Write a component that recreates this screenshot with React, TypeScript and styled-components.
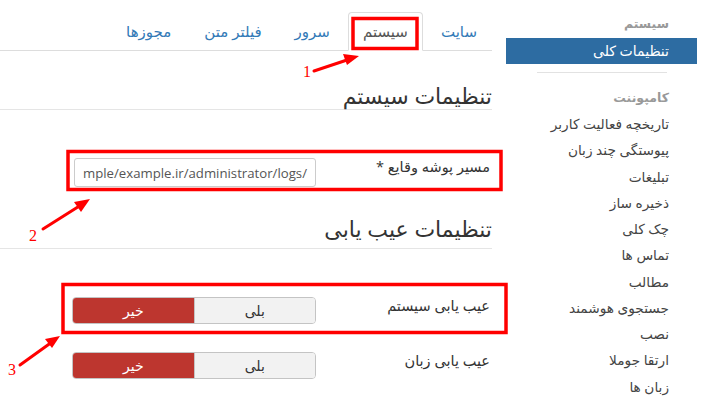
import * as React from 'react';
import styled, { createGlobalStyle } from 'styled-components';

const sideItems = [
  'تاریخچه فعالیت کاربر',
  'پیوستگی چند زبان',
  'تبلیغات',
  'ذخیره ساز',
  'چک کلی',
  'تماس ها',
  'مطالب',
  'جستجوی هوشمند',
  'نصب',
  'ارتقا جوملا',
  'زبان ها',
];

const tabs = ['سایت', 'سیستم', 'سرور', 'فیلتر متن', 'مجوزها'];

const App: React.FC = () => {
  return (
    <>
      <GlobalStyle />
      <Page>
        <Sidebar>
          <NavHeader $top={14}>سیستم</NavHeader>
          <ActiveItem>تنظیمات کلی</ActiveItem>
          <Divider />
          <NavHeader $top={15}>کامپوننت</NavHeader>
          <NavList>
            {sideItems.map((item) => (
              <NavItem key={item}>{item}</NavItem>
            ))}
          </NavList>
        </Sidebar>

        <Main>
          <Tabs>
            {tabs.map((t) => (
              <Tab key={t} $active={t === 'سیستم'}>
                {t}
              </Tab>
            ))}
          </Tabs>

          <SectionTitle $top={30} $bottom={0}>تنظیمات سیستم</SectionTitle>

          <FormRow $top={48}>
            <Label>مسیر پوشه وقایع *</Label>
            <TextBox>
              <span>mple/example.ir/administrator/logs/</span>
            </TextBox>
          </FormRow>

          <SectionTitle $top={27} $bottom={6}>تنظیمات عیب یابی</SectionTitle>

          <FormRow $top={48}>
            <Label>عیب یابی سیستم</Label>
            <Toggle>
              <ToggleBtn>بلی</ToggleBtn>
              <ToggleBtn $on>خیر</ToggleBtn>
            </Toggle>
          </FormRow>

          <FormRow $top={28}>
            <Label>عیب یابی زبان</Label>
            <Toggle>
              <ToggleBtn>بلی</ToggleBtn>
              <ToggleBtn $on>خیر</ToggleBtn>
            </Toggle>
          </FormRow>
        </Main>

        {/* red annotation marks drawn over the screenshot */}
        <Marks width="707" height="403" viewBox="0 0 707 403">
          <g fill="none" stroke="#f00" strokeWidth="3.5">
            <rect x="353" y="18.5" width="64" height="30" />
            <rect x="68" y="151.5" width="433" height="38" />
            <rect x="63" y="284.5" width="443" height="48" />
          </g>
          <g stroke="#f00" strokeWidth="3" strokeLinecap="round">
            <line x1="314" y1="71" x2="347" y2="60" />
            <line x1="43" y1="229" x2="81" y2="205" />
            <line x1="20" y1="365" x2="52" y2="342" />
          </g>
          <g fill="#f00">
            <polygon points="359,56 343,54 347,65" />
            <polygon points="90,199 74,202 81,212" />
            <polygon points="60,336 45,339 52,348" />
          </g>
          <g fill="#f00" fontFamily="'Liberation Serif', serif" fontSize="16">
            <text x="307" y="77" textAnchor="middle">1</text>
            <text x="33" y="241" textAnchor="middle">2</text>
            <text x="12" y="375" textAnchor="middle">3</text>
          </g>
        </Marks>
      </Page>
    </>
  );
};

const GlobalStyle = createGlobalStyle`
  html, body {
    margin: 0;
    padding: 0;
    background: #fff;
  }
  body {
    font-family: 'Open Sans', 'DejaVu Sans', sans-serif;
    color: #333;
    overflow: hidden;
  }
`;

const Page = styled.div`
  position: relative;
  display: flex;
  direction: rtl;
  width: 707px;
  height: 403px;
  overflow: hidden;
`;

const Sidebar = styled.nav`
  flex-shrink: 0;
  width: 191px;
  margin-right: 10px;
`;

const NavHeader = styled.div<{ $top: number }>`
  margin-top: ${(p) => p.$top}px;
  padding-right: 28px;
  font-size: 12.5px;
  font-weight: bold;
  line-height: 20px;
  color: #999;
`;

const ActiveItem = styled.div`
  margin-top: 4px;
  height: 26px;
  line-height: 26px;
  padding-right: 28px;
  background: #2d6ca2;
  color: #fff;
  font-size: 14px;
`;

const Divider = styled.div`
  height: 1px;
  margin: 8px 30px 0 31px;
  background: #e2e2e2;
`;

const NavList = styled.div`
  margin-top: 3px;
`;

const NavItem = styled.div`
  height: 26.25px;
  line-height: 26px;
  padding-right: 28px;
  font-size: 13.7px;
  color: #444;
  white-space: nowrap;
`;

const Main = styled.main`
  flex-shrink: 0;
  width: 492px;
  margin-right: 14px;
`;

const Tabs = styled.div`
  display: flex;
  align-items: flex-end;
  margin-top: 12px;
  height: 38px;
  border-bottom: 1px solid #ddd;
`;

const Tab = styled.div<{ $active?: boolean }>`
  height: ${(p) => (p.$active ? '39px' : '38px')};
  margin-bottom: ${(p) => (p.$active ? '-1px' : '0')};
  margin-left: 3px;
  padding: 0 14px;
  box-sizing: border-box;
  line-height: 37px;
  font-size: 15px;
  color: ${(p) => (p.$active ? '#555' : '#337ab7')};
  background: #fff;
  border: 1px solid ${(p) => (p.$active ? '#ddd' : 'transparent')};
  border-bottom-color: transparent;
  border-radius: 4px 4px 0 0;
  white-space: nowrap;
`;

const SectionTitle = styled.h2<{ $top: number; $bottom: number }>`
  margin: ${(p) => p.$top}px 0 0;
  padding-bottom: ${(p) => p.$bottom}px;
  font-size: 22px;
  font-weight: normal;
  line-height: 28px;
  color: #333;
  border-bottom: 1px solid #e5e5e5;
`;

const FormRow = styled.div<{ $top: number }>`
  display: flex;
  align-items: flex-start;
  margin-top: ${(p) => p.$top}px;
`;

const Label = styled.div`
  width: 174px;
  padding-right: 2px;
  font-size: 14.5px;
  line-height: 17px;
  color: #333;
`;

const TextBox = styled.div`
  display: flex;
  justify-content: flex-start;
  align-items: center;
  direction: ltr;
  width: 242px;
  height: 29px;
  box-sizing: border-box;
  padding: 0 8px;
  overflow: hidden;
  border: 1px solid #ccc;
  border-radius: 3px;
  font-family: 'Open Sans', sans-serif;
  font-size: 13.2px;
  color: #555;
  white-space: nowrap;
`;

const Toggle = styled.div`
  display: flex;
  width: 244px;
  height: 27px;
  box-sizing: border-box;
  border: 1px solid #c4c4c4;
  border-radius: 4px;
  overflow: hidden;
`;

const ToggleBtn = styled.div<{ $on?: boolean }>`
  flex: 1;
  display: flex;
  align-items: center;
  justify-content: center;
  font-size: 14px;
  color: ${(p) => (p.$on ? '#fff' : '#333')};
  background: ${(p) => (p.$on ? '#bd362f' : '#f2f2f2')};
  border-left: ${(p) => (p.$on ? 'none' : '1px solid #c4c4c4')};
`;

const Marks = styled.svg`
  position: absolute;
  top: 0;
  left: 0;
  pointer-events: none;
`;

export default App;
